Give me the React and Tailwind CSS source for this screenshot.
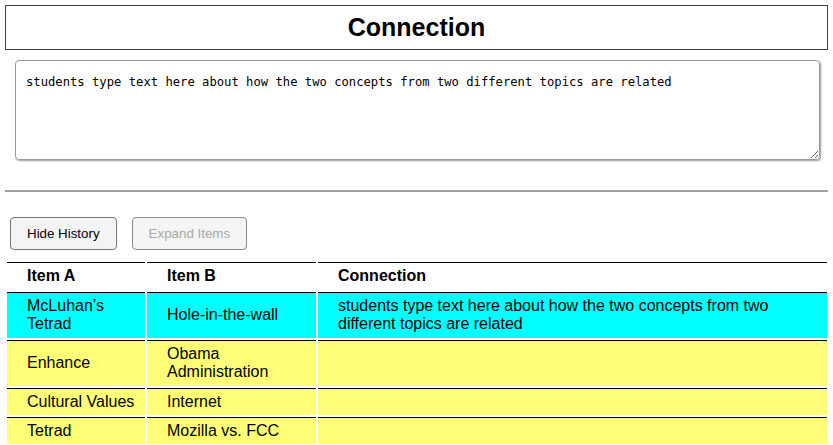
import React from 'react';

const rows = [
  { a: 'McLuhan’s Tetrad', b: 'Hole-in-the-wall', c: 'students type text here about how the two concepts from two different topics are related', active: true },
  { a: 'Enhance', b: 'Obama Administration', c: '' },
  { a: 'Cultural Values', b: 'Internet', c: '' },
  { a: 'Tetrad', b: 'Mozilla vs. FCC', c: '' },
];

export default function App() {
  return (
    <div className="w-[833px] p-[5px] bg-white text-black font-['Liberation_Sans',Arial,sans-serif]">
      {/* title box */}
      <div className="h-[45px] border border-[#404040] flex items-center justify-center">
        <h1 className="text-[25px] font-bold leading-none">Connection</h1>
      </div>

      {/* answer box */}
      <textarea
        defaultValue="students type text here about how the two concepts from two different topics are related"
        className="block mt-[10px] ml-[10px] w-[805px] h-[100px] border border-[#999] rounded-[4px] shadow-[1px_1px_2px_#999] px-[10px] pt-[14px] text-[12.2px] leading-[15px] font-['DejaVu_Sans_Mono',monospace] resize-y outline-none"
      />

      <div className="mt-[30px] h-[2px] bg-[#a0a0a0]" />

      {/* buttons */}
      <div className="mt-[25px] ml-[5px] flex gap-[15px]">
        <button className="h-[33px] px-4 border border-[#767676] rounded-[4px] bg-[#f4f4f4] text-[13.33px] text-black">
          Hide History
        </button>
        <button disabled className="h-[33px] px-4 border border-[#8a8a8a] rounded-[4px] bg-[#f4f4f4] text-[13.33px] text-[#a8a8a8]">
          Expand Items
        </button>
      </div>

      {/* history table */}
      <table className="mt-[10px] w-[824px] table-fixed border-separate border-spacing-[2px] text-[16px] leading-[1.15]">
        <thead>
          <tr>
            <th className="w-[138px] h-[28px] border-t border-black pl-5 py-1 text-left font-bold">Item A</th>
            <th className="w-[169px] h-[28px] border-t border-black pl-5 py-1 text-left font-bold">Item B</th>
            <th className="h-[28px] border-t border-black pl-5 py-1 text-left font-bold">Connection</th>
          </tr>
        </thead>
        <tbody>
          {rows.map((r, i) => (
            <tr key={i} className={r.active ? 'bg-[#00ffff]' : 'bg-[#ffff77]'}>
              <td className="border-t border-black pl-5 pr-2 py-1 align-middle">{r.a}</td>
              <td className="border-t border-black pl-5 pr-2 py-1 align-middle">{r.b}</td>
              <td className="border-t border-black pl-5 pr-5 py-1 align-middle">{r.c}</td>
            </tr>
          ))}
        </tbody>
      </table>
    </div>
  );
}
